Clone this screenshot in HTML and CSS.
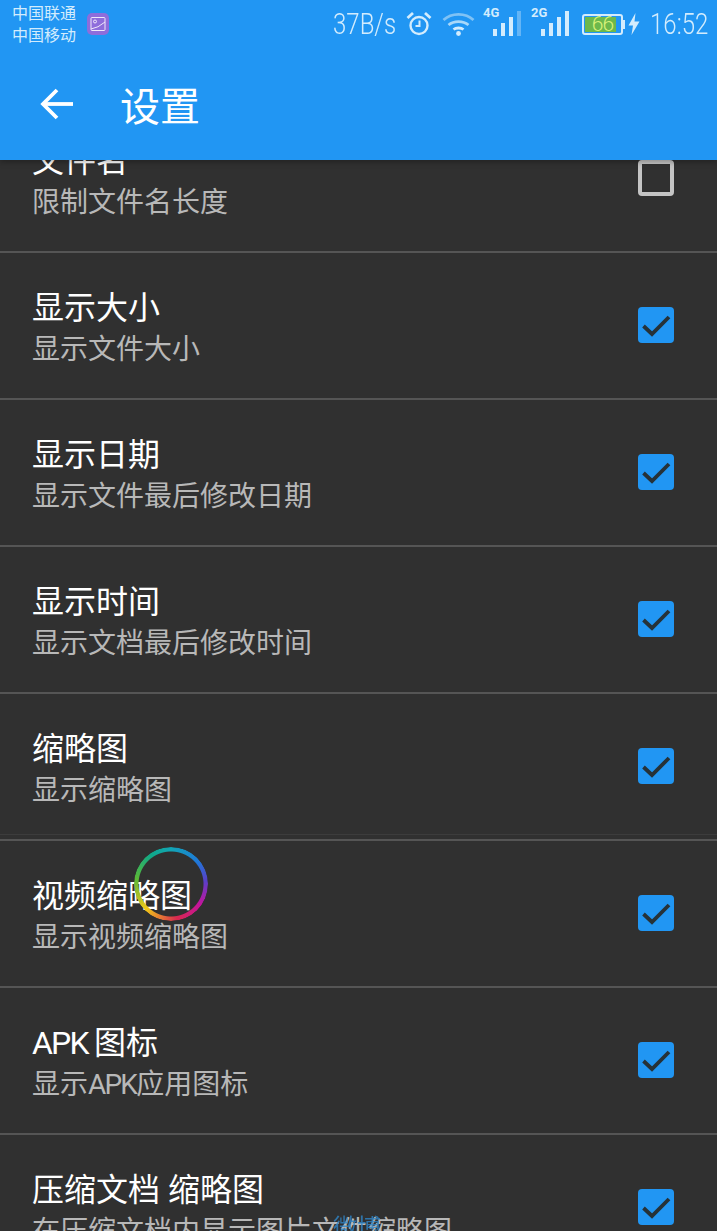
FILE: index.html
```html
<!DOCTYPE html>
<html lang="zh-CN">

<head>
    <meta charset="UTF-8">
    <meta name="viewport" content="width=device-width, initial-scale=1.0">
    <title>设置</title>
    <link rel="stylesheet" href="styles.css">
</head>

<body>
    <div class="phone">
        <!-- Top Bar -->
        <div class="topbar">
            <div class="statusbar">
                <div class="carriers">
                    <div>中国联通</div>
                    <div>中国移动</div>
                </div>
                <div class="gallery-badge">
                    <svg width="16" height="16" viewBox="0 0 16 16" fill="none" stroke="#efe8fa" stroke-width="1">
                        <rect x="1" y="1.5" width="14" height="13" rx="1"></rect>
                        <circle cx="5" cy="5.5" r="1.5"></circle>
                        <path d="M1 13 Q8 12 15 6"></path>
                    </svg>
                </div>
                <div class="status-right">
                    <span class="speed"><span class="narrow">37B/s</span></span>
                    <svg class="alarm" width="26" height="26" viewBox="0 0 26 26" fill="none" stroke="#d3ecfd" stroke-width="2.4">
                        <circle cx="13" cy="14.500" r="8.500"></circle>
                        <path d="M13.500 9.500V15H9.500" stroke-width="2"></path>
                        <path d="M1.500 7L7 2M24.500 7L19 2" stroke-width="2.800"></path>
                    </svg>
                    <svg class="wifi" width="33" height="26" viewBox="0 0 33 26" fill="none" stroke="#7fc2f5" stroke-width="2.800">
                        <path d="M1.500 9C9.500 1.500 23.500 1.500 31.500 9"></path>
                        <path d="M6.500 14C12 9.500 21 9.500 26.500 14" stroke="#a9d8f9"></path>
                        <path d="M11.500 18.500C14 16.500 19 16.500 21.500 18.500" stroke="#d3ecfd"></path>
                        <circle cx="16.500" cy="22.500" r="2.400" fill="#d3ecfd" stroke="none"></circle>
                    </svg>
                    <div class="signal">
                        <span class="net">4G</span>
                        <span class="bar b1"></span>
                        <span class="bar b2"></span>
                        <span class="bar b3"></span>
                        <span class="bar b4 dim"></span>
                    </div>
                    <div class="signal">
                        <span class="net">2G</span>
                        <span class="bar b1"></span>
                        <span class="bar b2"></span>
                        <span class="bar b3"></span>
                        <span class="bar b4"></span>
                    </div>
                    <div class="battery">
                        <div class="battery-body"><span>66</span></div>
                        <div class="battery-cap"></div>
                    </div>
                    <svg class="bolt" width="12" height="22" viewBox="0 0 12 22">
                        <path d="M7.500 0L0.500 12.500H5L3.500 22L11.500 8.500H6.500Z" fill="#d3ecfd"></path>
                    </svg>
                    <span class="clock"><span class="narrow">16:52</span></span>
                </div>
            </div>
            <div class="toolbar">
                <svg class="back" width="33" height="32" viewBox="0 0 33 32" fill="none" stroke="#fff" stroke-width="3.800">
                    <path d="M33 16H4"></path>
                    <path d="M17 2L3 16L17 30"></path>
                </svg>
                <div class="toolbar-title">设置</div>
            </div>
        </div>

        <!-- Settings List -->
        <div class="settings">
            <div class="row">
                <div class="row-text">
                    <div class="row-title">文件名</div>
                    <div class="row-desc">限制文件名长度</div>
                </div>
                <span class="check"></span>
            </div>
            <div class="row">
                <div class="row-text">
                    <div class="row-title">显示大小</div>
                    <div class="row-desc">显示文件大小</div>
                </div>
                <span class="check on"><svg width="36" height="36" viewBox="0 0 36 36"><path d="M5.500 19L14 27L31 10" fill="none" stroke="#263238" stroke-width="3.800"></path></svg></span>
            </div>
            <div class="row">
                <div class="row-text">
                    <div class="row-title">显示日期</div>
                    <div class="row-desc">显示文件最后修改日期</div>
                </div>
                <span class="check on"><svg width="36" height="36" viewBox="0 0 36 36"><path d="M5.500 19L14 27L31 10" fill="none" stroke="#263238" stroke-width="3.800"></path></svg></span>
            </div>
            <div class="row">
                <div class="row-text">
                    <div class="row-title">显示时间</div>
                    <div class="row-desc">显示文档最后修改时间</div>
                </div>
                <span class="check on"><svg width="36" height="36" viewBox="0 0 36 36"><path d="M5.500 19L14 27L31 10" fill="none" stroke="#263238" stroke-width="3.800"></path></svg></span>
            </div>
            <div class="row row-ghost">
                <div class="row-text">
                    <div class="row-title">缩略图</div>
                    <div class="row-desc">显示缩略图</div>
                </div>
                <span class="check on"><svg width="36" height="36" viewBox="0 0 36 36"><path d="M5.500 19L14 27L31 10" fill="none" stroke="#263238" stroke-width="3.800"></path></svg></span>
            </div>
            <div class="row">
                <div class="row-text">
                    <div class="row-title">视频缩略图</div>
                    <div class="row-desc">显示视频缩略图</div>
                </div>
                <span class="check on"><svg width="36" height="36" viewBox="0 0 36 36"><path d="M5.500 19L14 27L31 10" fill="none" stroke="#263238" stroke-width="3.800"></path></svg></span>
            </div>
            <div class="row">
                <div class="row-text">
                    <div class="row-title"><span class="latin">APK </span>图标</div>
                    <div class="row-desc">显示<span class="latin">APK</span>应用图标</div>
                </div>
                <span class="check on"><svg width="36" height="36" viewBox="0 0 36 36"><path d="M5.500 19L14 27L31 10" fill="none" stroke="#263238" stroke-width="3.800"></path></svg></span>
            </div>
            <div class="row">
                <div class="row-text">
                    <div class="row-title">压缩文档 缩略图</div>
                    <div class="row-desc">在压缩文档内显示图片文件缩略图</div>
                </div>
                <span class="check on"><svg width="36" height="36" viewBox="0 0 36 36"><path d="M5.500 19L14 27L31 10" fill="none" stroke="#263238" stroke-width="3.800"></path></svg></span>
            </div>
        </div>

        <!-- Floating ring and toast over the list -->
        <div class="float-ring"></div>
        <div class="toast">微博</div>
    </div>
</body>

</html>
```

FILE: styles.css
```css
/* General Styling */
body {
    font-family: Roboto, "Noto Sans CJK SC", sans-serif;
    background-color: #303030;
    margin: 0;
    padding: 0;
}

.phone {
    position: relative;
    height: 1231px;
    overflow: hidden;
}

/* Top Bar */
.topbar {
    position: relative;
    z-index: 10;
    height: 160px;
    background-color: #2196f3;
    box-shadow: 0 2px 6px rgba(0, 0, 0, 0.3);
}

.statusbar {
    height: 48px;
    padding: 0 9px 0 12px;
    display: flex;
    align-items: center;
    color: #d3ecfd;
}

.carriers {
    font-size: 16px;
    line-height: 22px;
    margin-top: 1px;
}

.gallery-badge {
    width: 22px;
    height: 22px;
    margin-left: 11px;
    border-radius: 5px;
    background-color: #8e6ddb;
    display: flex;
    align-items: center;
    justify-content: center;
}

.status-right {
    margin-left: auto;
    display: flex;
    align-items: center;
}

.speed,
.clock {
    width: 63px;
    height: 36px;
    font-weight: 300;
    font-size: 30px;
    line-height: 36px;
    white-space: nowrap;
}

/* the status font is taller and narrower than Roboto */
.narrow {
    display: inline-block;
    transform: scaleX(0.8);
    transform-origin: left center;
}

.alarm {
    margin-left: 10px;
}

.wifi {
    margin-left: 10px;
}

.signal {
    position: relative;
    width: 38px;
    height: 30px;
    margin-top: -6px;
    margin-left: 8px;
    display: flex;
    align-items: flex-end;
    justify-content: flex-end;
    gap: 3.500px;
}

.signal + .signal {
    margin-left: 10px;
}

.signal .net {
    position: absolute;
    left: 0;
    top: 0;
    font-weight: 700;
    font-size: 13px;
    line-height: 14px;
}

.signal .bar {
    width: 4.500px;
    background-color: #d3ecfd;
}

.signal .b1 { height: 7px; }
.signal .b2 { height: 13px; }
.signal .b3 { height: 19px; }
.signal .b4 { height: 25px; }
.signal .dim { background-color: #64b5f6; }

.battery {
    display: flex;
    align-items: center;
    margin-left: 13px;
}

.battery-body {
    width: 41px;
    height: 21px;
    box-sizing: border-box;
    border: 2px solid #d3ecfd;
    border-radius: 3px;
    padding: 1px;
    display: flex;
}

.battery-body span {
    flex: 1;
    background: linear-gradient(to right, #6cb84c 90%, transparent 90%);
    color: #d9f27a;
    font-weight: 300;
    font-size: 21px;
    line-height: 15px;
    letter-spacing: -1px;
    text-align: center;
}

.battery-cap {
    width: 2px;
    height: 9px;
    background-color: #d3ecfd;
}

.bolt {
    margin-left: 3px;
}

.clock {
    width: 58px;
    margin-left: 10px;
}

.toolbar {
    height: 112px;
    display: flex;
    align-items: center;
}

.back {
    margin-left: 40px;
}

.toolbar-title {
    margin-left: 47px;
    font-size: 40px;
    color: #fff;
}

/* Settings List */
.settings {
    margin-top: -54px;
}

.row {
    height: 145px;
    border-bottom: 2px solid #555;
    padding: 0 43px 0 32px;
    display: flex;
    align-items: center;
    justify-content: space-between;
}

/* faint second line left above the divider in this row */
.row-ghost {
    background: linear-gradient(to bottom, transparent 140px, #3c3c3c 140px, #3c3c3c 141px, transparent 141px);
}

.row-text {
    padding-top: 6px;
}

.row-title {
    font-size: 32px;
    line-height: 40px;
    margin-bottom: 2px;
    color: #fff;
}

.row-desc {
    font-size: 28px;
    line-height: 40px;
    color: #b8b8b8;
}

.latin {
    letter-spacing: -1.800px;
}

/* Checkbox */
.check {
    width: 36px;
    height: 36px;
    margin-top: -2px;
    box-sizing: border-box;
    border: 4px solid #c4c4c4;
    border-radius: 4px;
}

.check.on {
    border: none;
    background-color: #2196f3;
}

.check svg {
    display: block;
}

/* Floating ring */
.float-ring {
    position: absolute;
    left: 134px;
    top: 847px;
    width: 74px;
    height: 74px;
    border-radius: 50%;
    background: conic-gradient(#12a5b5 0deg, #1f78d8 50deg, #5a3fc8 85deg, #c4149c 125deg, #d82850 170deg, #f0c818 225deg, #58b838 280deg, #10a888 325deg, #12a5b5 360deg);
    -webkit-mask: radial-gradient(circle, transparent 32px, #000 33px);
    mask: radial-gradient(circle, transparent 32px, #000 33px);
}

.toast {
    position: absolute;
    left: 333px;
    top: 1213px;
    font-size: 24px;
    line-height: 30px;
    color: #2f86c8;
    opacity: 0.8;
}
```
